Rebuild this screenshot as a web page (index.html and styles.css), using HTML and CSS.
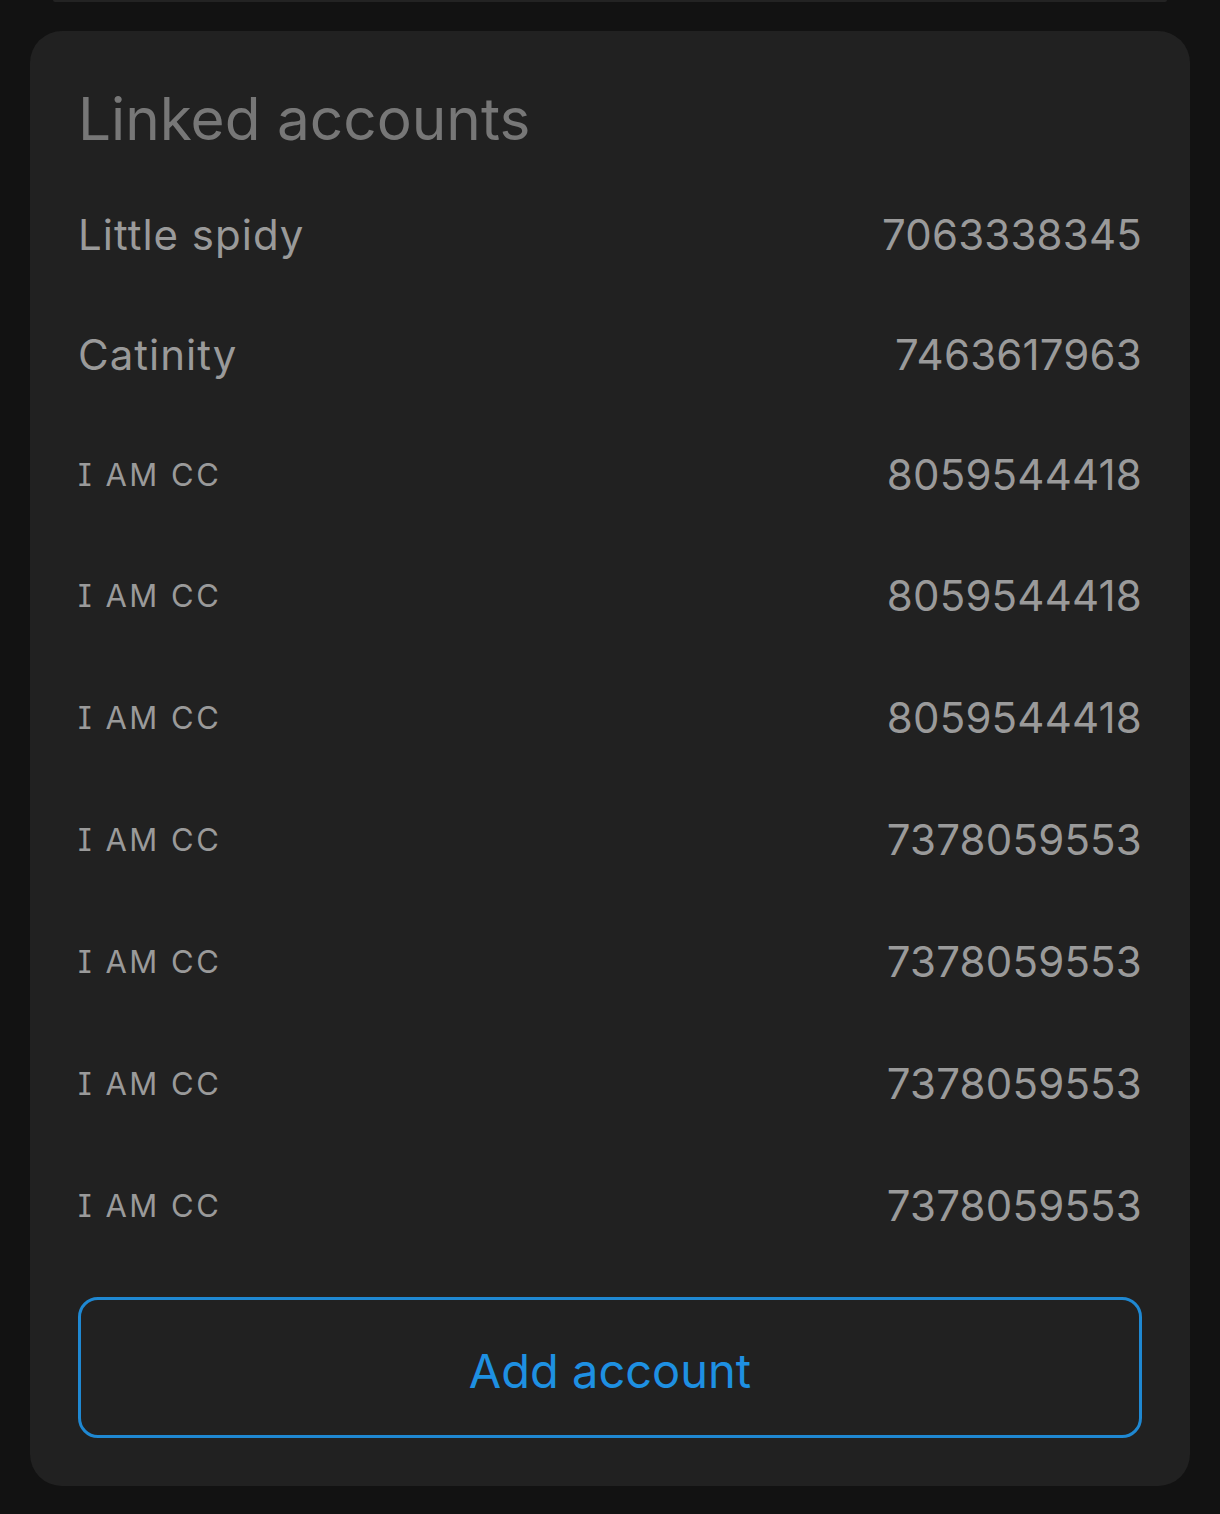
FILE: index.html
```html
<!DOCTYPE html>
<html lang="en">
<head>
<meta charset="utf-8">
<title>Linked accounts</title>
<link rel="stylesheet" href="styles.css">
</head>
<body>
<div class="page">
  <div class="prev-card"></div>
  <section class="card">
    <h2 class="title">Linked accounts</h2>
    <ul class="list">
      <li class="row"><span class="name">Little spidy</span><span class="num">7063338345</span></li>
      <li class="row"><span class="name">Catinity</span><span class="num">7463617963</span></li>
      <li class="row"><span class="name caps">I AM CC</span><span class="num">8059544418</span></li>
      <li class="row"><span class="name caps">I AM CC</span><span class="num">8059544418</span></li>
      <li class="row"><span class="name caps">I AM CC</span><span class="num">8059544418</span></li>
      <li class="row"><span class="name caps">I AM CC</span><span class="num">7378059553</span></li>
      <li class="row"><span class="name caps">I AM CC</span><span class="num">7378059553</span></li>
      <li class="row"><span class="name caps">I AM CC</span><span class="num">7378059553</span></li>
      <li class="row"><span class="name caps">I AM CC</span><span class="num">7378059553</span></li>
    </ul>
    <button class="add-btn" type="button">Add account</button>
  </section>
</div>
</body>
</html>
```

FILE: styles.css
```css
html, body {
  margin: 0;
  padding: 0;
  background: #121212;
}

body {
  font-family: Inter, "Noto Sans", sans-serif;
  width: 1220px;
  height: 1514px;
  overflow: hidden;
}

.page {
  display: flex;
  flex-direction: column;
  align-items: center;
}

.prev-card {
  width: 1114px;
  height: 2px;
  background: #232323;
  border-radius: 0 0 12px 12px;
}

.card {
  margin-top: 29px;
  width: 1160px;
  box-sizing: border-box;
  background: #212121;
  border-radius: 32px;
  padding: 44px 48px 48px 48px;
  display: flex;
  flex-direction: column;
}

.title {
  margin: 0 0 11px 0;
  font-size: 58.5px;
  line-height: 88px;
  font-weight: 400;
  color: #777777;
}

.list {
  list-style: none;
  margin: 0;
  padding: 0;
  display: flex;
  flex-direction: column;
}

.row {
  height: 122px;
  display: flex;
  align-items: center;
  justify-content: space-between;
}

.row:nth-child(-n+3) {
  height: 120px;
}

.name {
  font-size: 42px;
  color: #9a9a9a;
  letter-spacing: 1px;
}

.name.caps {
  font-size: 31px;
  letter-spacing: 2.5px;
  font-feature-settings: "cv08" 1;
}

.num {
  font-size: 42px;
  color: #9a9a9a;
  letter-spacing: 0.2px;
}

.add-btn {
  margin-top: 31px;
  height: 141px;
  width: 100%;
  background: transparent;
  border: 3px solid #1f88d2;
  border-radius: 20px;
  color: #1e90e2;
  font-family: Inter, "Noto Sans", sans-serif;
  font-size: 47px;
  font-weight: 400;
  padding: 5px 0 0 0;
  cursor: pointer;
}
```
